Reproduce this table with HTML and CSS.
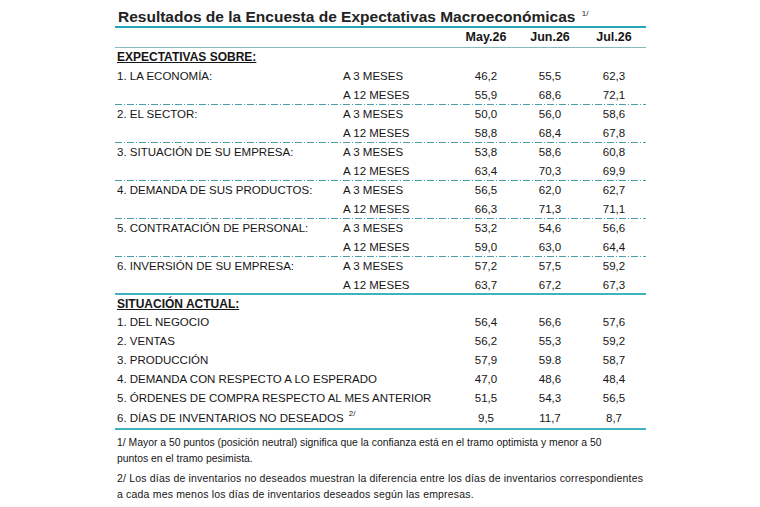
FILE: index.html
```html
<!DOCTYPE html>
<html lang="es">
<head>
<meta charset="utf-8">
<title>Resultados de la Encuesta de Expectativas Macroeconómicas</title>
<link rel="stylesheet" href="styles.css">
</head>
<body>
<div class="sheet">
  <h1 class="title">Resultados de la Encuesta de Expectativas Macroeconómicas <sup class="note">1/</sup></h1>

  <div class="row head">
    <span class="label"></span><span class="period"></span>
    <span class="num">May.26</span><span class="num">Jun.26</span><span class="num">Jul.26</span>
  </div>

  <div class="row section"><span class="label"><u>EXPECTATIVAS SOBRE:</u></span></div>

  <div class="row"><span class="label">1. LA ECONOMÍA:</span><span class="period">A 3 MESES</span><span class="num">46,2</span><span class="num">55,5</span><span class="num">62,3</span></div>
  <div class="row sep"><span class="label"></span><span class="period">A 12 MESES</span><span class="num">55,9</span><span class="num">68,6</span><span class="num">72,1</span></div>

  <div class="row"><span class="label">2. EL SECTOR:</span><span class="period">A 3 MESES</span><span class="num">50,0</span><span class="num">56,0</span><span class="num">58,6</span></div>
  <div class="row sep"><span class="label"></span><span class="period">A 12 MESES</span><span class="num">58,8</span><span class="num">68,4</span><span class="num">67,8</span></div>

  <div class="row"><span class="label">3. SITUACIÓN DE SU EMPRESA:</span><span class="period">A 3 MESES</span><span class="num">53,8</span><span class="num">58,6</span><span class="num">60,8</span></div>
  <div class="row sep"><span class="label"></span><span class="period">A 12 MESES</span><span class="num">63,4</span><span class="num">70,3</span><span class="num">69,9</span></div>

  <div class="row"><span class="label">4. DEMANDA DE SUS PRODUCTOS:</span><span class="period">A 3 MESES</span><span class="num">56,5</span><span class="num">62,0</span><span class="num">62,7</span></div>
  <div class="row sep"><span class="label"></span><span class="period">A 12 MESES</span><span class="num">66,3</span><span class="num">71,3</span><span class="num">71,1</span></div>

  <div class="row"><span class="label">5. CONTRATACIÓN DE PERSONAL:</span><span class="period">A 3 MESES</span><span class="num">53,2</span><span class="num">54,6</span><span class="num">56,6</span></div>
  <div class="row sep"><span class="label"></span><span class="period">A 12 MESES</span><span class="num">59,0</span><span class="num">63,0</span><span class="num">64,4</span></div>

  <div class="row"><span class="label">6. INVERSIÓN DE SU EMPRESA:</span><span class="period">A 3 MESES</span><span class="num">57,2</span><span class="num">57,5</span><span class="num">59,2</span></div>
  <div class="row solid"><span class="label"></span><span class="period">A 12 MESES</span><span class="num">63,7</span><span class="num">67,2</span><span class="num">67,3</span></div>

  <div class="row section section-2"><span class="label"><u>SITUACIÓN ACTUAL:</u></span></div>

  <div class="row"><span class="label wide">1. DEL NEGOCIO</span><span class="num">56,4</span><span class="num">56,6</span><span class="num">57,6</span></div>
  <div class="row"><span class="label wide">2. VENTAS</span><span class="num">56,2</span><span class="num">55,3</span><span class="num">59,2</span></div>
  <div class="row"><span class="label wide">3. PRODUCCIÓN</span><span class="num">57,9</span><span class="num">59.8</span><span class="num">58,7</span></div>
  <div class="row"><span class="label wide">4. DEMANDA CON RESPECTO A LO ESPERADO</span><span class="num">47,0</span><span class="num">48,6</span><span class="num">48,4</span></div>
  <div class="row"><span class="label wide">5. ÓRDENES DE COMPRA RESPECTO AL MES ANTERIOR</span><span class="num">51,5</span><span class="num">54,3</span><span class="num">56,5</span></div>
  <div class="row solid last"><span class="label wide">6. DÍAS DE INVENTARIOS NO DESEADOS <sup class="note">2/</sup></span><span class="num">9,5</span><span class="num">11,7</span><span class="num">8,7</span></div>

  <div class="notes">
    <p class="n1">1/ Mayor a 50 puntos (posición neutral) significa que la confianza está en el tramo optimista y menor a 50<br>puntos en el tramo pesimista.</p>
    <p class="n2">2/ Los días de inventarios no deseados muestran la diferencia entre los días de inventarios correspondientes<br>a cada mes menos los días de inventarios deseados según las empresas.</p>
  </div>
</div>
</body>
</html>
```

FILE: styles.css
```css
html, body {
  margin: 0;
  padding: 0;
  background: #ffffff;
}

body {
  font-family: "Liberation Sans", Arial, sans-serif;
  color: #161616;
}

.sheet {
  width: 531px;
  margin-left: 115px;
}

.title {
  margin: 0;
  padding: 7px 0 0 3px;
  font-size: 15.5px;
  line-height: 19px;
  font-weight: bold;
  color: #222222;
  border-bottom: 2px solid #25a6b6;
}

.note {
  font-size: 8px;
  font-weight: normal;
  vertical-align: 6px;
  line-height: 0;
  margin-left: 2px;
}

.row {
  display: grid;
  grid-template-columns: 228px 111px 64px 64px 64px;
  height: 19px;
  align-items: center;
  font-size: 11.5px;
  line-height: 19px;
  white-space: nowrap;
}

.label {
  padding-left: 2px;
}

.label.wide {
  grid-column: 1 / 3;
}

.num {
  text-align: center;
}

.head {
  height: 19px;
  font-size: 12.5px;
  font-weight: bold;
  border-bottom: 1px solid #86b8bf;
}

.section {
  font-size: 12px;
  font-weight: bold;
}

.section u {
  text-decoration-thickness: 1px;
  text-underline-offset: 1px;
}

.section-2 {
  height: 18px;
}

.sep {
  height: 18px;
  padding-bottom: 1px;
  background-image: repeating-linear-gradient(90deg,
    #4b9fab 0 7px, transparent 7px 9px,
    #4b9fab 9px 10px, transparent 10px 12px);
  background-size: 100% 1px;
  background-repeat: no-repeat;
  background-position: left bottom;
}

.solid {
  height: 17px;
  border-bottom: 2px solid #3fb2bf;
}

.solid.last {
  height: 20px;
}

.notes {
  padding: 5px 0 0 2px;
  line-height: 16px;
}

.notes p {
  margin: 0 0 3px 0;
  white-space: nowrap;
}

.n1 {
  font-size: 10.4px;
}

.n2 {
  font-size: 10.5px;
  letter-spacing: 0.18px;
}
```
